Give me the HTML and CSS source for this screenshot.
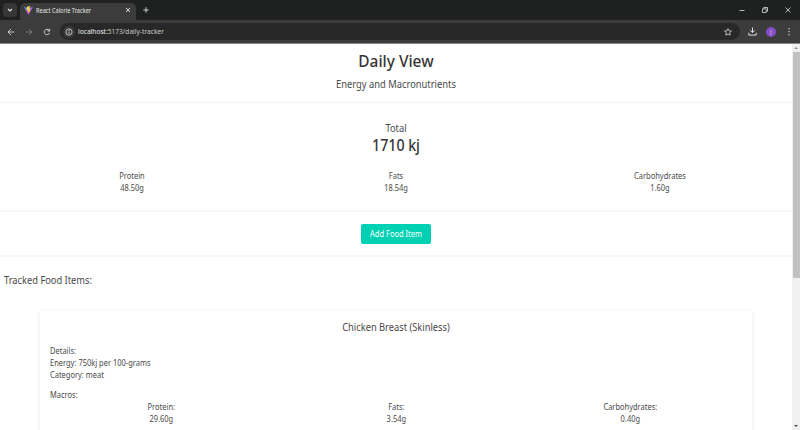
FILE: index.html
```html
<!DOCTYPE html>
<html lang="en">
<head>
<meta charset="utf-8">
<title>React Calorie Tracker</title>
<link rel="stylesheet" href="styles.css">
</head>
<body>
<div class="browser">
  <header class="tabstrip">
    <div class="tab-search"><svg width="8" height="8" viewBox="0 0 8 8"><path d="M2 3l2 2 2-2" fill="none" stroke="#e3e3e3" stroke-width="1.1"/></svg></div>
    <div class="tab">
      <svg width="9" height="9" viewBox="0 0 18 18">
        <defs>
          <linearGradient id="v" x1="0" y1="0" x2=".7" y2="1"><stop offset="0" stop-color="#41b1ff"/><stop offset=".6" stop-color="#a050fe"/><stop offset="1" stop-color="#bd34fe"/></linearGradient>
          <linearGradient id="b" x1="0" y1="0" x2="0" y2="1"><stop offset="0" stop-color="#ffea50"/><stop offset="1" stop-color="#ffa800"/></linearGradient>
        </defs>
        <path d="M0 2l9 2 9-2-9 16z" fill="url(#v)"/>
        <path d="M13 0L6 1.500l-.5 8L8 9l-.5 3.500 1.500-.5-1 4.500L13.500 7l-2.500.500L12 4l-2 .4z" fill="url(#b)"/>
      </svg>
      <span class="tab-title">React Calorie Tracker</span>
      <svg class="tab-close" width="6" height="6" viewBox="0 0 6 6"><path d="M1 1l4 4M5 1l-4 4" stroke="#e3e3e3" stroke-width=".9"/></svg>
    </div>
    <svg class="new-tab" width="6" height="6" viewBox="0 0 6 6"><path d="M3 .3v5.400M.3 3h5.400" stroke="#dcdcdc" stroke-width=".9"/></svg>
    <div class="window-buttons">
      <svg width="6" height="6" viewBox="0 0 6 6"><path d="M.5 3.500h5" stroke="#ddd" stroke-width=".8"/></svg>
      <svg width="6" height="6" viewBox="0 0 6 6"><path d="M.5 1.800h3.700v3.700H.5zM1.700 1.500V.5h3.800v3.800H4.500" fill="none" stroke="#ddd" stroke-width=".8"/></svg>
      <svg width="6" height="6" viewBox="0 0 6 6"><path d="M.5.5l5 5m0-5l-5 5" stroke="#ddd" stroke-width=".8"/></svg>
    </div>
  </header>
  <nav class="toolbar">
    <svg width="8" height="8" viewBox="0 0 8 8"><path d="M7.200 4H1.200M4 1L1 4l3 3" fill="none" stroke="#ddd" stroke-width=".9"/></svg>
    <svg width="8" height="8" viewBox="0 0 8 8"><path d="M.8 4h6M4 1l3 3-3 3" fill="none" stroke="#858585" stroke-width=".9"/></svg>
    <svg width="8" height="8" viewBox="0 0 8 8"><path d="M6.500 5A2.700 2.700 0 1 1 6 2.200L6.500 3M6.700.8V3H4.500" fill="none" stroke="#ddd" stroke-width=".9"/></svg>
    <div class="address">
      <span class="info"><svg width="8" height="8" viewBox="0 0 8 8"><circle cx="4" cy="4" r="3.100" fill="none" stroke="#ddd" stroke-width=".8"/><path d="M4 3.500v2.200M4 2v.9" stroke="#ddd" stroke-width=".9"/></svg></span>
      <span class="url"><b>localhost</b>:5173/daily-tracker</span>
      <svg class="star" width="8" height="8" viewBox="0 0 8 8"><path d="M4 .6l1 2.200 2.500.25-1.850 1.650.5 2.500L4 6 1.850 7.200l.5-2.500L.5 3.050 3 2.800z" fill="none" stroke="#ddd" stroke-width=".8"/></svg>
    </div>
    <svg class="download" width="9" height="9" viewBox="0 0 9 9"><path d="M4.500.5v5M2.300 3.400l2.200 2.200 2.200-2.200M.8 5.800v2.300h7.400V5.800" fill="none" stroke="#ddd" stroke-width="1"/></svg>
    <span class="avatar">J</span>
    <svg class="menu" width="4" height="9" viewBox="0 0 4 9"><path d="M2 1v1.200M2 4v1.200M2 7v1.200" stroke="#ddd" stroke-width="1.200"/></svg>
  </nav>
  <div class="viewport">
    <main class="page">
      <section class="hero">
        <h1>Daily View</h1>
        <p class="subtitle">Energy and Macronutrients</p>
      </section>
      <section class="totals">
        <p class="subtitle">Total</p>
        <p class="total">1710 kj</p>
        <div class="columns">
          <div>Protein<br>48.50g</div>
          <div>Fats<br>18.54g</div>
          <div>Carbohydrates<br>1.60g</div>
        </div>
      </section>
      <section class="actions"><button class="add"><span>Add Food Item</span></button></section>
      <section class="tracked">
        <h2>Tracked Food Items:</h2>
        <article class="card">
          <h3>Chicken Breast (Skinless)</h3>
          <p>Details:<br>Energy: 750kj per 100-grams<br>Category: meat</p>
          <p class="macros">Macros:</p>
          <div class="columns card-columns">
            <div>Protein:<br>29.60g</div>
            <div>Fats:<br>3.54g</div>
            <div>Carbohydrates:<br>0.40g</div>
          </div>
        </article>
      </section>
    </main>
    <aside class="scrollbar">
      <svg width="8" height="8" viewBox="0 0 8 8"><path d="M2 5l2-2 2 2z" fill="#8b8b8b"/></svg>
      <div class="thumb"></div>
      <svg class="down" width="8" height="8" viewBox="0 0 8 8"><path d="M2 3l2 2 2-2z" fill="#444"/></svg>
    </aside>
  </div>
</div>
</body>
</html>
```
FILE: styles.css
```css
* { box-sizing: border-box; margin: 0; padding: 0; }
body { font-family: "Noto Sans", "Open Sans", sans-serif; background: #fff; overflow: hidden; }
svg { display: block; flex: none; }
.browser { width: 800px; height: 430px; display: flex; flex-direction: column; overflow: hidden; }

.tabstrip { height: 20px; background: #1f2020; display: flex; align-items: center; padding-left: 3px; }
.tab-search { width: 14px; height: 14px; border-radius: 4px; background: #373737; display: flex; align-items: center; justify-content: center; }
.tab { width: 116px; height: 17px; margin: 3px 0 0 3px; padding: 0 5px 3px 4px; background: #3c3c3c; border-radius: 5px 5px 0 0; display: flex; align-items: center; }
.tab-title { margin-left: 3px; font-size: 6.2px; transform: scaleX(.905); transform-origin: left; color: #e8e8e8; white-space: nowrap; }
.tab-close { margin-left: auto; }
.new-tab { margin-left: 7px; }
.window-buttons { margin-left: auto; padding-right: 9px; display: flex; gap: 17px; }

.toolbar { height: 24px; background: #3c3c3c; border-bottom: 1px solid #8a8a8a; display: flex; align-items: center; padding: 0 9px 0 7px; }
.toolbar > svg + svg { margin-left: 10px; }
.address { width: 680px; height: 17px; margin-left: 9px; padding: 0 8px 0 3px; border-radius: 9px; background: #282828; display: flex; align-items: center; }
.info { width: 12px; height: 12px; border-radius: 6px; background: #3a3a3a; display: flex; align-items: center; justify-content: center; }
.url { margin-left: 3px; font-size: 7px; transform: scaleX(.945); transform-origin: left; color: #c8c8c8; white-space: nowrap; }
.url b { font-weight: 400; color: #f0f0f0; }
.star { margin-left: auto; }
.download { margin-left: 8px; }
.avatar { width: 10px; height: 10px; margin-left: 9px; border-radius: 5px; background: #8250c4; color: #e6d8f5; font-size: 5px; line-height: 10px; text-align: center; }
.menu { margin-left: 11px; }

.viewport { flex: 1; min-height: 0; display: flex; overflow: hidden; }
.page { flex: 1; color: #4a4a4a; font-size: 8px; line-height: 12px; }
.hero { height: 58.500px; padding-top: 8px; text-align: center; border-bottom: 1px solid #f3f3f3; }
h1, .total { font-size: 16px; line-height: 18px; font-weight: 500; color: #363636; }
h1 { transform: scaleX(.965); }
.total { transform: scaleX(.885); }
.subtitle { font-size: 10px; line-height: 12px; transform: scaleX(.935); }
.hero .subtitle { margin-top: 8px; }
.totals { height: 109.500px; padding-top: 19px; text-align: center; border-bottom: 2px solid #f8f8f8; }
.total { margin-top: 2px; }
.columns { display: grid; grid-template-columns: repeat(3, 1fr); text-align: center; }
.columns > div, .add span { transform: scaleX(.935); }
.totals .columns { margin-top: 16px; }
.actions { height: 45px; display: flex; align-items: center; justify-content: center; border-bottom: 2px solid #f8f8f8; }
.add { width: 70px; height: 20px; border: 0; border-radius: 2px; background: #00d1b2; color: #fff; font: 8px/20px "Noto Sans", sans-serif; white-space: nowrap; }
.add span { display: block; }
.tracked { padding-top: 17px; }
h2, h3 { font-size: 10px; line-height: 12px; font-weight: 400; transform: scaleX(.93); }
h2 { margin-left: 4px; transform-origin: left; }
.card { height: 200px; margin: 24px 40px 0; padding: 11px 10px; border-radius: 3px; background: #fff; box-shadow: 0 4px 8px -1px rgba(10,10,10,.08), 0 0 0 1px rgba(10,10,10,.015); }
.card p { transform: scaleX(.935); transform-origin: left; }
h3 { text-align: center; margin-bottom: 12px; }
.macros { margin-top: 8px; }
.card-columns { margin: 0 -6px; }

.scrollbar { width: 8px; background: #f0f0f0; display: flex; flex-direction: column; align-items: center; }
.thumb { width: 7px; height: 226px; background: #c1c1c1; }
.down { margin-top: auto; }
```
